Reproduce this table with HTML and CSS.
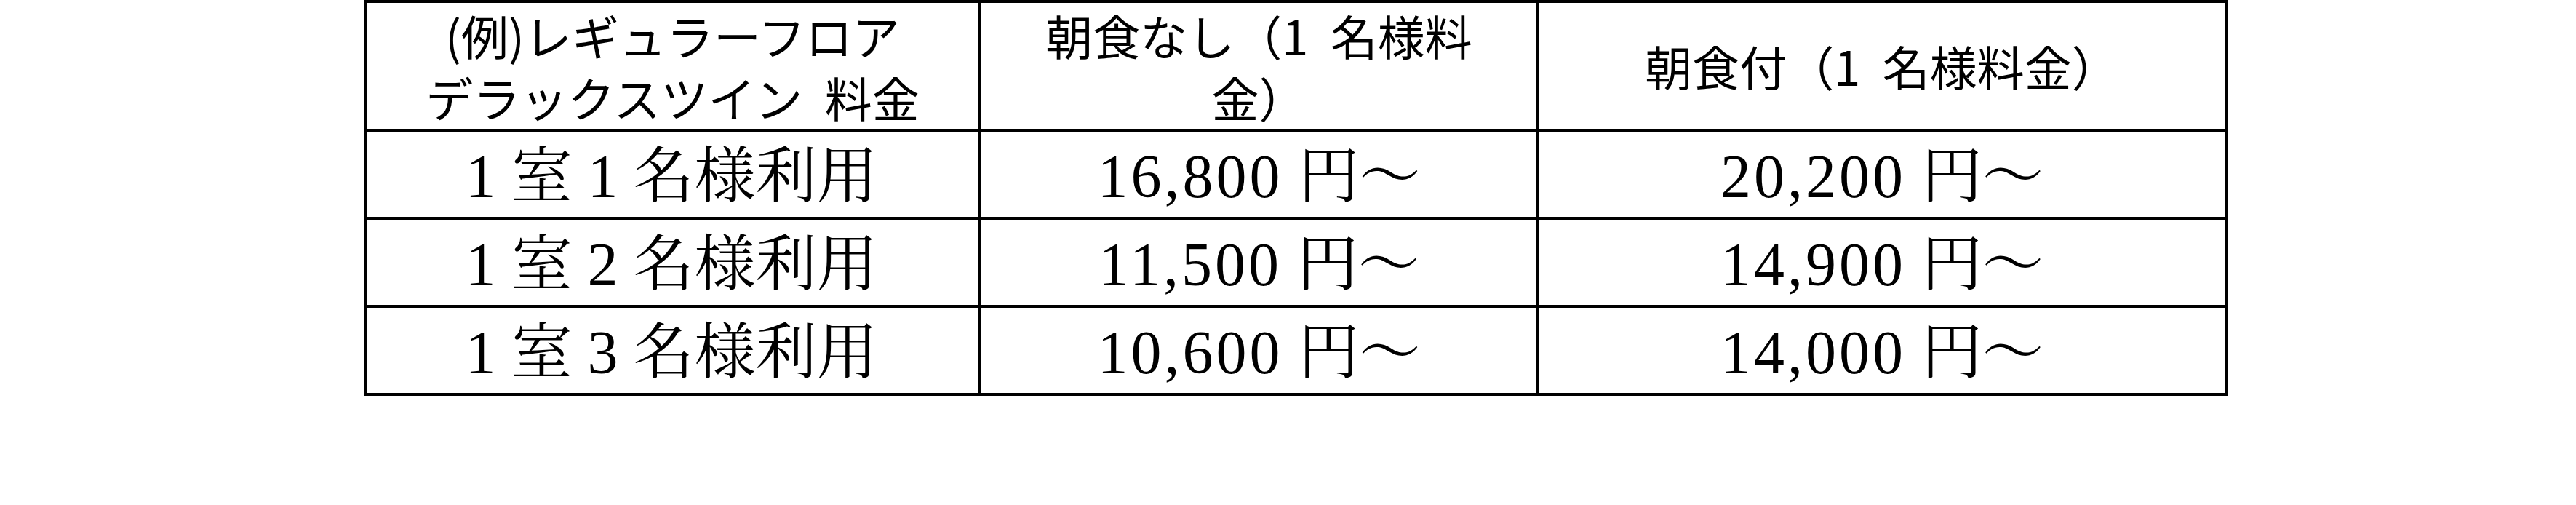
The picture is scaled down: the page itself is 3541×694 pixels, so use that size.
FILE: index.html
```html
<!DOCTYPE html>
<html lang="ja">
<head>
<meta charset="utf-8">
<title>料金表</title>
<link rel="stylesheet" href="styles.css">
</head>
<body>
<div class="rate-table">
  <div class="cell head">(例)レギュラーフロア<br>デラックスツイン 料金</div>
  <div class="cell head">朝食なし（1 名様料<br>金）</div>
  <div class="cell head">朝食付（1 名様料金）</div>

  <div class="cell label"><span class="fw">1</span>室<span class="fw">1</span>名様利用</div>
  <div class="cell price"><span class="amount">16,800</span><span class="unit">円～</span></div>
  <div class="cell price"><span class="amount">20,200</span><span class="unit">円～</span></div>

  <div class="cell label"><span class="fw">1</span>室<span class="fw">2</span>名様利用</div>
  <div class="cell price"><span class="amount">11,500</span><span class="unit">円～</span></div>
  <div class="cell price"><span class="amount">14,900</span><span class="unit">円～</span></div>

  <div class="cell label"><span class="fw">1</span>室<span class="fw">3</span>名様利用</div>
  <div class="cell price"><span class="amount">10,600</span><span class="unit">円～</span></div>
  <div class="cell price"><span class="amount">14,000</span><span class="unit">円～</span></div>
</div>
</body>
</html>
```

FILE: styles.css
```css
html, body {
  margin: 0;
  padding: 0;
  background: #ffffff;
  color: #000000;
}

.rate-table {
  margin-left: 500px;
  display: grid;
  grid-template-columns: 845px 767px 946px;
  grid-template-rows: 177px 121px 121px 121px;
  width: max-content;
  border-top: 4px solid #000;
  border-left: 4px solid #000;
}

.cell {
  border-right: 4px solid #000;
  border-bottom: 4px solid #000;
  display: flex;
  align-items: center;
  justify-content: center;
  text-align: center;
  white-space: nowrap;
}

.head {
  font-family: "Noto Sans CJK JP", "Noto Sans", sans-serif;
  font-size: 65px;
  line-height: 85px;
  word-spacing: 16px;
}

.label,
.price {
  font-family: "Liberation Serif", "Noto Serif CJK JP", "IPAMincho", "Noto Sans CJK JP", serif;
  font-size: 84px;
  line-height: 1;
  padding-top: 6px;
}

.label {
  padding-right: 24px;
}

.fw {
  display: inline-block;
  width: 1em;
  text-align: center;
}

.amount {
  letter-spacing: 4px;
}

.unit {
  margin-left: 0.25em;
}
```
